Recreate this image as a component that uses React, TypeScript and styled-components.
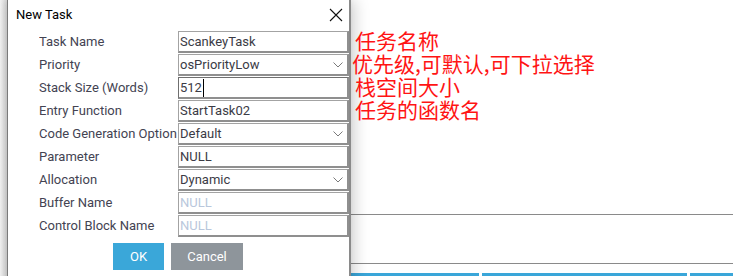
import styled, { createGlobalStyle } from "styled-components";

const GlobalStyle = createGlobalStyle`
  html, body {
    margin: 0;
    padding: 0;
    background: #ffffff;
    overflow: hidden;
  }
  body {
    font-family: Roboto, "Liberation Sans", Arial, sans-serif;
  }
`;

const Page = styled.div`
  position: relative;
  width: 733px;
  height: 276px;
  overflow: hidden;
  background: #ffffff;
  display: flex;
  flex-direction: column;
`;

// the table behind the dialog
const Backdrop = styled.div`
  display: flex;
  flex-direction: column;
  padding-top: 214px;
`;

const TableRow = styled.div<{ $h: number }>`
  height: ${(p) => p.$h}px;
  border-top: 1px solid #8a8a8a;
`;

const BlueStrip = styled.div`
  display: flex;
  gap: 3px;
  height: 4px;
  margin-left: 350px;
`;

const BlueCell = styled.div<{ $w: number }>`
  width: ${(p) => p.$w}px;
  flex-shrink: 0;
  background: #3aa6d9;
`;

const LeftStrip = styled.div`
  position: absolute;
  left: 0;
  top: 0;
  width: 7px;
  height: 276px;
  background: linear-gradient(to right, #f2f2f2, #dcdcdc);
`;

const Dialog = styled.div`
  position: absolute;
  left: 7px;
  top: 0;
  width: 341px;
  height: 300px;
  background: #ffffff;
  border-left: 1px solid #7a7a7a;
  border-right: 2px solid #8a8a8a;
  box-shadow: 4px 0 14px rgba(0, 0, 0, 0.18), -2px 0 6px rgba(0, 0, 0, 0.1);
  display: flex;
  flex-direction: column;
`;

const TitleBar = styled.div`
  height: 31px;
  display: flex;
  align-items: center;
  justify-content: space-between;
  padding: 0 6px 0 8px;
  font-size: 13px;
  color: #000;
`;

const Title = styled.span`
  margin-top: -2px;
`;

const CloseButton = styled.button`
  border: none;
  background: none;
  padding: 0;
  width: 14px;
  height: 14px;
  margin-top: -2px;
  display: flex;
  cursor: pointer;
`;

const Form = styled.div`
  display: flex;
  flex-direction: column;
  gap: 1px;
  padding-left: 31px;
`;

const Row = styled.div`
  display: flex;
  height: 22px;
`;

const Label = styled.div`
  width: 139px;
  flex-shrink: 0;
  overflow: hidden;
  white-space: nowrap;
  font-size: 13px;
  line-height: 22px;
  color: #434352;
`;

const Field = styled.div<{ $focus?: boolean }>`
  flex: 1;
  display: flex;
  align-items: center;
  justify-content: space-between;
  box-sizing: border-box;
  border: 1px solid ${(p) => (p.$focus ? "#6f6f6f" : "#a3a3a3")};
  border-bottom: 2px solid #8f8f8f;
  border-right: 2px solid #8f8f8f;
  padding: 0 4px 0 1px;
  font-size: 13px;
  color: #3b3b45;
`;

const Value = styled.span<{ $placeholder?: boolean }>`
  color: ${(p) => (p.$placeholder ? "#b9c7dc" : "#3b3b45")};
  display: flex;
  align-items: center;
`;

const Caret = styled.span`
  display: inline-block;
  width: 1px;
  height: 18px;
  background: #000;
  margin-left: 1px;
`;

const Buttons = styled.div`
  display: flex;
  justify-content: center;
  gap: 7px;
  margin-top: 6px;
  padding-right: 1px;
`;

const Button = styled.button<{ $primary?: boolean }>`
  height: 27px;
  width: ${(p) => (p.$primary ? 51 : 72)}px;
  border: none;
  color: #ffffff;
  font-family: Roboto, "Liberation Sans", Arial, sans-serif;
  font-size: 13px;
  background: ${(p) => (p.$primary ? "#3aa7d9" : "#8e959b")};
  cursor: pointer;
`;

const Notes = styled.div`
  position: absolute;
  left: 352px;
  top: 29px;
  display: flex;
  flex-direction: column;
  font-family: "Noto Sans CJK SC", sans-serif;
  font-size: 21px;
  line-height: 23px;
  color: #ff1414;
`;

const Note = styled.div<{ $indent?: number }>`
  height: 23px;
  padding-left: ${(p) => p.$indent ?? 0}px;
  white-space: nowrap;
`;

const Chevron = () => (
  <svg width="10" height="6" viewBox="0 0 10 6">
    <polyline points="0.5,0.5 5,5 9.5,0.5" fill="none" stroke="#7a7a7a" strokeWidth="1" />
  </svg>
);

const CloseIcon = () => (
  <svg width="14" height="14" viewBox="0 0 14 14">
    <path d="M1 1 L13 13 M13 1 L1 13" stroke="#111" strokeWidth="1.1" />
  </svg>
);

type FieldDef = {
  label: string;
  value: string;
  select?: boolean;
  placeholder?: boolean;
  focus?: boolean;
};

const fields: FieldDef[] = [
  { label: "Task Name", value: "ScankeyTask" },
  { label: "Priority", value: "osPriorityLow", select: true },
  { label: "Stack Size (Words)", value: "512", focus: true },
  { label: "Entry Function", value: "StartTask02" },
  { label: "Code Generation Option", value: "Default", select: true },
  { label: "Parameter", value: "NULL" },
  { label: "Allocation", value: "Dynamic", select: true },
  { label: "Buffer Name", value: "NULL", placeholder: true },
  { label: "Control Block Name", value: "NULL", placeholder: true },
];

export default function App() {
  return (
    <Page>
      <GlobalStyle />
      <Backdrop>
        <TableRow $h={48} />
        <TableRow $h={9} />
        <BlueStrip>
          <BlueCell $w={129} />
          <BlueCell $w={205} />
          <BlueCell $w={60} />
        </BlueStrip>
      </Backdrop>
      <LeftStrip />

      <Dialog>
        <TitleBar>
          <Title>New Task</Title>
          <CloseButton aria-label="close">
            <CloseIcon />
          </CloseButton>
        </TitleBar>
        <Form>
          {fields.map((f) => (
            <Row key={f.label}>
              <Label>{f.label}</Label>
              <Field $focus={f.focus}>
                <Value $placeholder={f.placeholder}>
                  {f.value}
                  {f.focus && <Caret />}
                </Value>
                {f.select && <Chevron />}
              </Field>
            </Row>
          ))}
        </Form>
        <Buttons>
          <Button $primary>OK</Button>
          <Button>Cancel</Button>
        </Buttons>
      </Dialog>

      <Notes>
        <Note $indent={3}>任务名称</Note>
        <Note>优先级,可默认,可下拉选择</Note>
        <Note $indent={3}>栈空间大小</Note>
        <Note $indent={3}>任务的函数名</Note>
      </Notes>
    </Page>
  );
}
